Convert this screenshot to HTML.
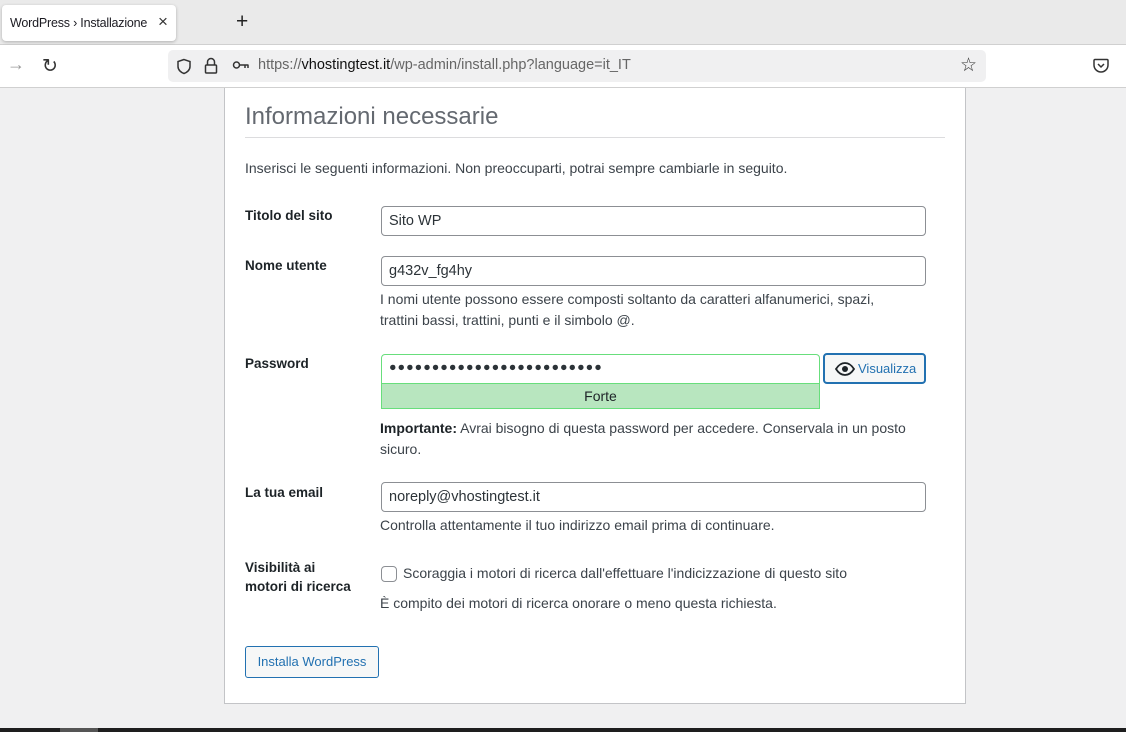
<!DOCTYPE html>
<html><head><meta charset="utf-8"><style>
*{box-sizing:border-box;margin:0;padding:0}
body{width:1126px;height:732px;overflow:hidden;background:#f0f0f1;font-family:"Liberation Sans","DejaVu Sans",sans-serif;color:#1d2327;position:relative}
.a{position:absolute;white-space:nowrap}
.tabbar{position:absolute;left:0;top:0;width:1126px;height:45px;background:#eaeaea;border-bottom:1px solid #d0d0d0}
.tab{position:absolute;left:2px;top:5px;width:174px;height:36px;background:#fff;border-radius:4px;box-shadow:0 1px 3px rgba(0,0,0,.25)}
.nav{position:absolute;left:0;top:45px;width:1126px;height:43px;background:#fff;border-bottom:1px solid #d0d0d0}
.url{position:absolute;left:168px;top:5px;width:818px;height:32px;background:#f0f0f1;border-radius:5px}
.card{position:absolute;left:224px;top:88px;width:742px;height:616px;background:#fff;border:1px solid #c3c4c7;border-top:none}
.lbl{position:absolute;left:245px;font-size:13.5px;font-weight:bold;color:#1d2327;line-height:19px}
.inp{position:absolute;left:381px;width:545px;height:30px;border:1px solid #8c8f94;border-radius:4px;background:#fff;font-size:14.5px;padding:6px 7px;color:#2c3338}
.t{position:absolute;font-size:14px;color:#3c434a;line-height:21px}
</style></head><body>
<div class="tabbar"><div class="tab"><span class="a" style="left:8px;top:11px;font-size:12.5px;color:#1c1b22;letter-spacing:-0.2px">WordPress › Installazione</span><span class="a" style="left:156px;top:7px;font-size:17px;color:#333">×</span></div>
<span class="a" style="left:236px;top:10px;font-size:21px;color:#222">+</span></div>
<div class="nav">
<span class="a" style="left:7px;top:9px;font-size:18px;color:#999">→</span>
<span class="a" style="left:42px;top:10px;font-size:19px;color:#333">↻</span>
<div class="url">
<svg class="a" style="left:8px;top:8px" width="16" height="17" viewBox="0 0 16 17"><path d="M8 1.5L2 3.5v5c0 3.5 3 6 6 7 3-1 6-3.5 6-7v-5z" fill="none" stroke="#333" stroke-width="1.5"/></svg>
<svg class="a" style="left:36px;top:7px" width="14" height="18" viewBox="0 0 14 18"><path d="M3.5 8V5a3.5 3.5 0 017 0v3" fill="none" stroke="#333" stroke-width="1.5"/><rect x="1.5" y="8" width="11" height="8" rx="1" fill="none" stroke="#333" stroke-width="1.5"/></svg>
<svg class="a" style="left:64px;top:10px" width="18" height="10" viewBox="0 0 18 10"><circle cx="4.5" cy="5" r="3" fill="none" stroke="#333" stroke-width="1.5"/><path d="M7.5 5h9M13 5v3M16 5v3" stroke="#333" stroke-width="1.5"/></svg>
<span class="a" style="left:90px;top:7px;font-size:14.5px;color:#666">https://<span style="color:#111">vhostingtest.it</span>/wp-admin/install.php?language=it_IT</span>
<span class="a" style="left:792px;top:4px;font-size:19px;color:#333">☆</span>
</div>
<svg class="a" style="left:1093px;top:13px" width="16" height="15" viewBox="0 0 16 15"><path d="M2 1.5h12a1 1 0 011 1V7a7 7 0 01-14 0V2.5a1 1 0 011-1z" fill="none" stroke="#333" stroke-width="1.5"/><path d="M5 6l3 3 3-3" fill="none" stroke="#333" stroke-width="1.5"/></svg>
</div>
<div class="card"></div>
<span class="a" style="left:245px;top:103px;font-size:24px;color:#646970">Informazioni necessarie</span>
<div class="a" style="left:245px;top:137px;width:700px;height:1px;background:#dcdcde"></div>
<span class="t a" style="left:245px;top:158px">Inserisci le seguenti informazioni. Non preoccuparti, potrai sempre cambiarle in seguito.</span>
<div class="lbl" style="top:206px">Titolo del sito</div>
<div class="inp" style="top:206px">Sito WP</div>
<div class="lbl" style="top:256px">Nome utente</div>
<div class="inp" style="top:256px">g432v_fg4hy</div>
<div class="t" style="left:380px;top:289px">I nomi utente possono essere composti soltanto da caratteri alfanumerici, spazi,<br>trattini bassi, trattini, punti e il simbolo @.</div>
<div class="lbl" style="top:354px">Password</div>
<div class="inp" style="top:354px;width:439px;border-color:#68de7c;border-radius:4px 4px 0 0;font-size:12.5px;letter-spacing:1px;padding-top:5px">●●●●●●●●●●●●●●●●●●●●●●●●●</div>
<div class="a" style="left:381px;top:383px;width:439px;height:26px;background:#b8e6bf;border:1px solid #68de7c;font-size:14px;text-align:center;line-height:24px">Forte</div>
<div class="a" style="left:823px;top:353px;width:103px;height:31px;border:2px solid #2271b1;border-radius:4px;background:#f6f7f7;color:#2271b1;font-size:13px;line-height:27px;padding-left:10px"><svg style="vertical-align:-3px;margin-right:3px" width="20" height="14" viewBox="0 0 20 14"><path d="M1 7c2.5-4 5.5-6 9-6s6.5 2 9 6c-2.5 4-5.5 6-9 6s-6.5-2-9-6z" fill="none" stroke="#1d2327" stroke-width="1.8"/><circle cx="10" cy="7" r="3" fill="#1d2327"/></svg>Visualizza</div>
<div class="t" style="left:380px;top:418px"><b style="color:#1d2327">Importante:</b> Avrai bisogno di questa password per accedere. Conservala in un posto<br>sicuro.</div>
<div class="lbl" style="top:483px">La tua email</div>
<div class="inp" style="top:482px">noreply@vhostingtest.it</div>
<div class="t" style="left:380px;top:515px">Controlla attentamente il tuo indirizzo email prima di continuare.</div>
<div class="lbl" style="top:558px">Visibilità ai<br>motori di ricerca</div>
<div class="a" style="left:381px;top:566px;width:16px;height:16px;border:1px solid #8c8f94;border-radius:4px;background:#fff"></div>
<span class="t a" style="left:403px;top:563px">Scoraggia i motori di ricerca dall'effettuare l'indicizzazione di questo sito</span>
<span class="t a" style="left:380px;top:593px">È compito dei motori di ricerca onorare o meno questa richiesta.</span>
<div class="a" style="left:245px;top:646px;width:134px;height:32px;border:1px solid #2271b1;border-radius:3px;background:#f6f7f7;color:#2271b1;font-size:13px;text-align:center;line-height:30px">Installa WordPress</div>
<div class="a" style="left:0;top:728px;width:1126px;height:4px;background:#1e1e1e"></div>
<div class="a" style="left:60px;top:728px;width:38px;height:4px;background:#555"></div>
</body></html>
